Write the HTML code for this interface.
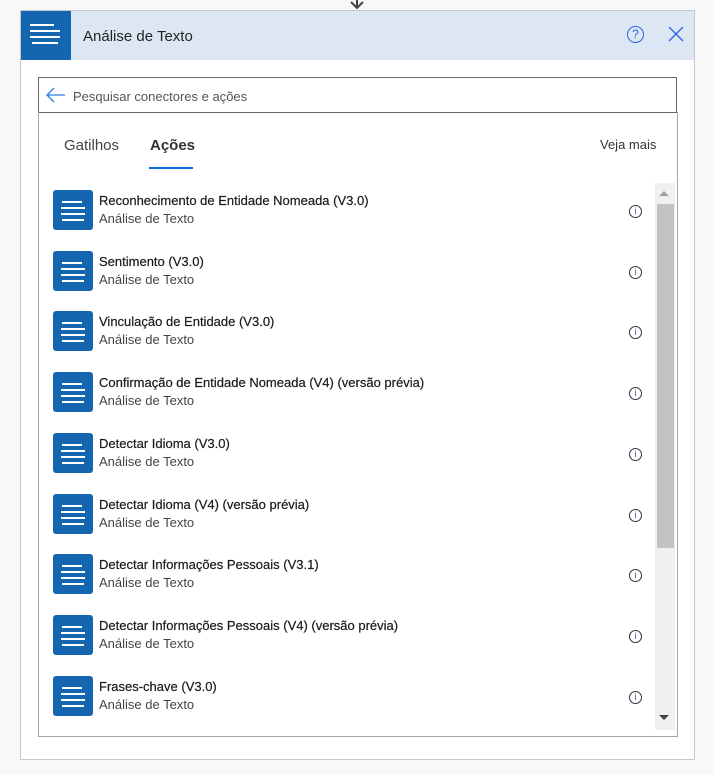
<!DOCTYPE html><html><head><style>
body{margin:0;width:713px;height:775px;background:#f8f8f8;font-family:"Liberation Sans",sans-serif;position:relative;overflow:hidden}
.a{position:absolute}
.card{left:20px;top:10px;width:673px;height:748px;background:#fff;border:1px solid #c8c8c8}
.hdr{left:21px;top:11px;width:673px;height:49px;background:#dce7f3}
.hi{left:21px;top:11px;width:50px;height:49px;background:#1466b0}
.ln{position:absolute;height:2px;background:#fff}
.row{position:absolute;left:53px;width:580px;height:40px}
.ic{position:absolute;left:0;top:0;width:40px;height:40px;background:#1466b0;border-radius:3px}
.t1{position:absolute;left:46px;top:3px;font-size:13px;color:#1a1a1a;white-space:nowrap;-webkit-text-stroke:0.2px #1a1a1a}
.t2{position:absolute;left:46px;top:21px;font-size:13px;color:#444;white-space:nowrap}
.inf{position:absolute;left:576px;top:15px;width:11px;height:11px;border:1px solid #333;border-radius:50%;font-size:9px;line-height:11px;text-align:center;color:#6a3ab0}
</style></head><body>
<svg class="a" style="left:347px;top:0" width="20" height="10"><path d="M10 0V8M4 2L10 8L16 2" stroke="#444" stroke-width="2" fill="none"/></svg>
<div class="a card"></div>
<div class="a hdr"></div>
<div class="a hi"><div class="ln" style="left:9px;top:13px;width:24px"></div><div class="ln" style="left:9px;top:19px;width:30px"></div><div class="ln" style="left:9px;top:25px;width:30px"></div><div class="ln" style="left:11px;top:31px;width:26px"></div></div>
<div class="a" style="left:83px;top:28px;font-size:15px;color:#222">Análise de Texto</div>
<div class="a" style="left:627px;top:26px;width:15px;height:15px;border:1.3px solid #2f62e6;border-radius:50%;color:#2f62e6;font-size:12px;line-height:15px;text-align:center">?</div>
<svg class="a" style="left:668px;top:26px" width="16" height="16"><path d="M1 1L15 15M15 1L1 15" stroke="#2f62e6" stroke-width="1.3"/></svg>
<div class="a" style="left:38px;top:77px;width:637px;height:34px;border:1px solid #666;background:#fff"></div>
<svg class="a" style="left:46px;top:87px" width="20" height="16"><path d="M19 8H2M8 1L1 8L8 15" stroke="#2f7ae5" stroke-width="1.3" fill="none"/></svg>
<div class="a" style="left:73px;top:89px;font-size:13px;color:#555">Pesquisar conectores e ações</div>
<div class="a" style="left:38px;top:112px;width:638px;height:624px;border:1px solid #a6a6a6;border-top:none"></div>
<div class="a" style="left:64px;top:137px;font-size:15px;color:#444">Gatilhos</div>
<div class="a" style="left:150px;top:137px;font-size:15px;color:#333;font-weight:bold">Ações</div>
<div class="a" style="left:149px;top:167px;width:44px;height:2px;background:#0f6cde"></div>
<div class="a" style="left:600px;top:137px;font-size:13px;color:#333">Veja mais</div>
<div class="a" style="left:655px;top:183px;width:20px;height:547px;background:#f0f0f0"></div>
<div class="a" style="left:657px;top:204px;width:17px;height:344px;background:#c2c2c2"></div>
<svg class="a" style="left:659px;top:190px" width="10" height="8"><path d="M0 6L5 1L10 6Z" fill="#a0a0a0"/></svg>
<svg class="a" style="left:659px;top:714px" width="10" height="8"><path d="M0 1L5 6L10 1Z" fill="#444"/></svg>
<div id="L"></div>
<script>
var t=["Reconhecimento de Entidade Nomeada (V3.0)","Sentimento (V3.0)","Vinculação de Entidade (V3.0)","Confirmação de Entidade Nomeada (V4) (versão prévia)","Detectar Idioma (V3.0)","Detectar Idioma (V4) (versão prévia)","Detectar Informações Pessoais (V3.1)","Detectar Informações Pessoais (V4) (versão prévia)","Frases-chave (V3.0)"];
var h="";t.forEach(function(s,i){var y=190+Math.round(i*60.7);
h+='<div class="row" style="top:'+y+'px"><div class="ic"><div class="ln" style="left:9px;top:11px;width:20px"></div><div class="ln" style="left:8px;top:17px;width:24px"></div><div class="ln" style="left:8px;top:23px;width:24px"></div><div class="ln" style="left:9px;top:29px;width:22px"></div></div><div class="t1">'+s+'</div><div class="t2">Análise de Texto</div><div class="inf">i</div></div>';});
document.getElementById("L").innerHTML=h;
</script>
</body></html>
